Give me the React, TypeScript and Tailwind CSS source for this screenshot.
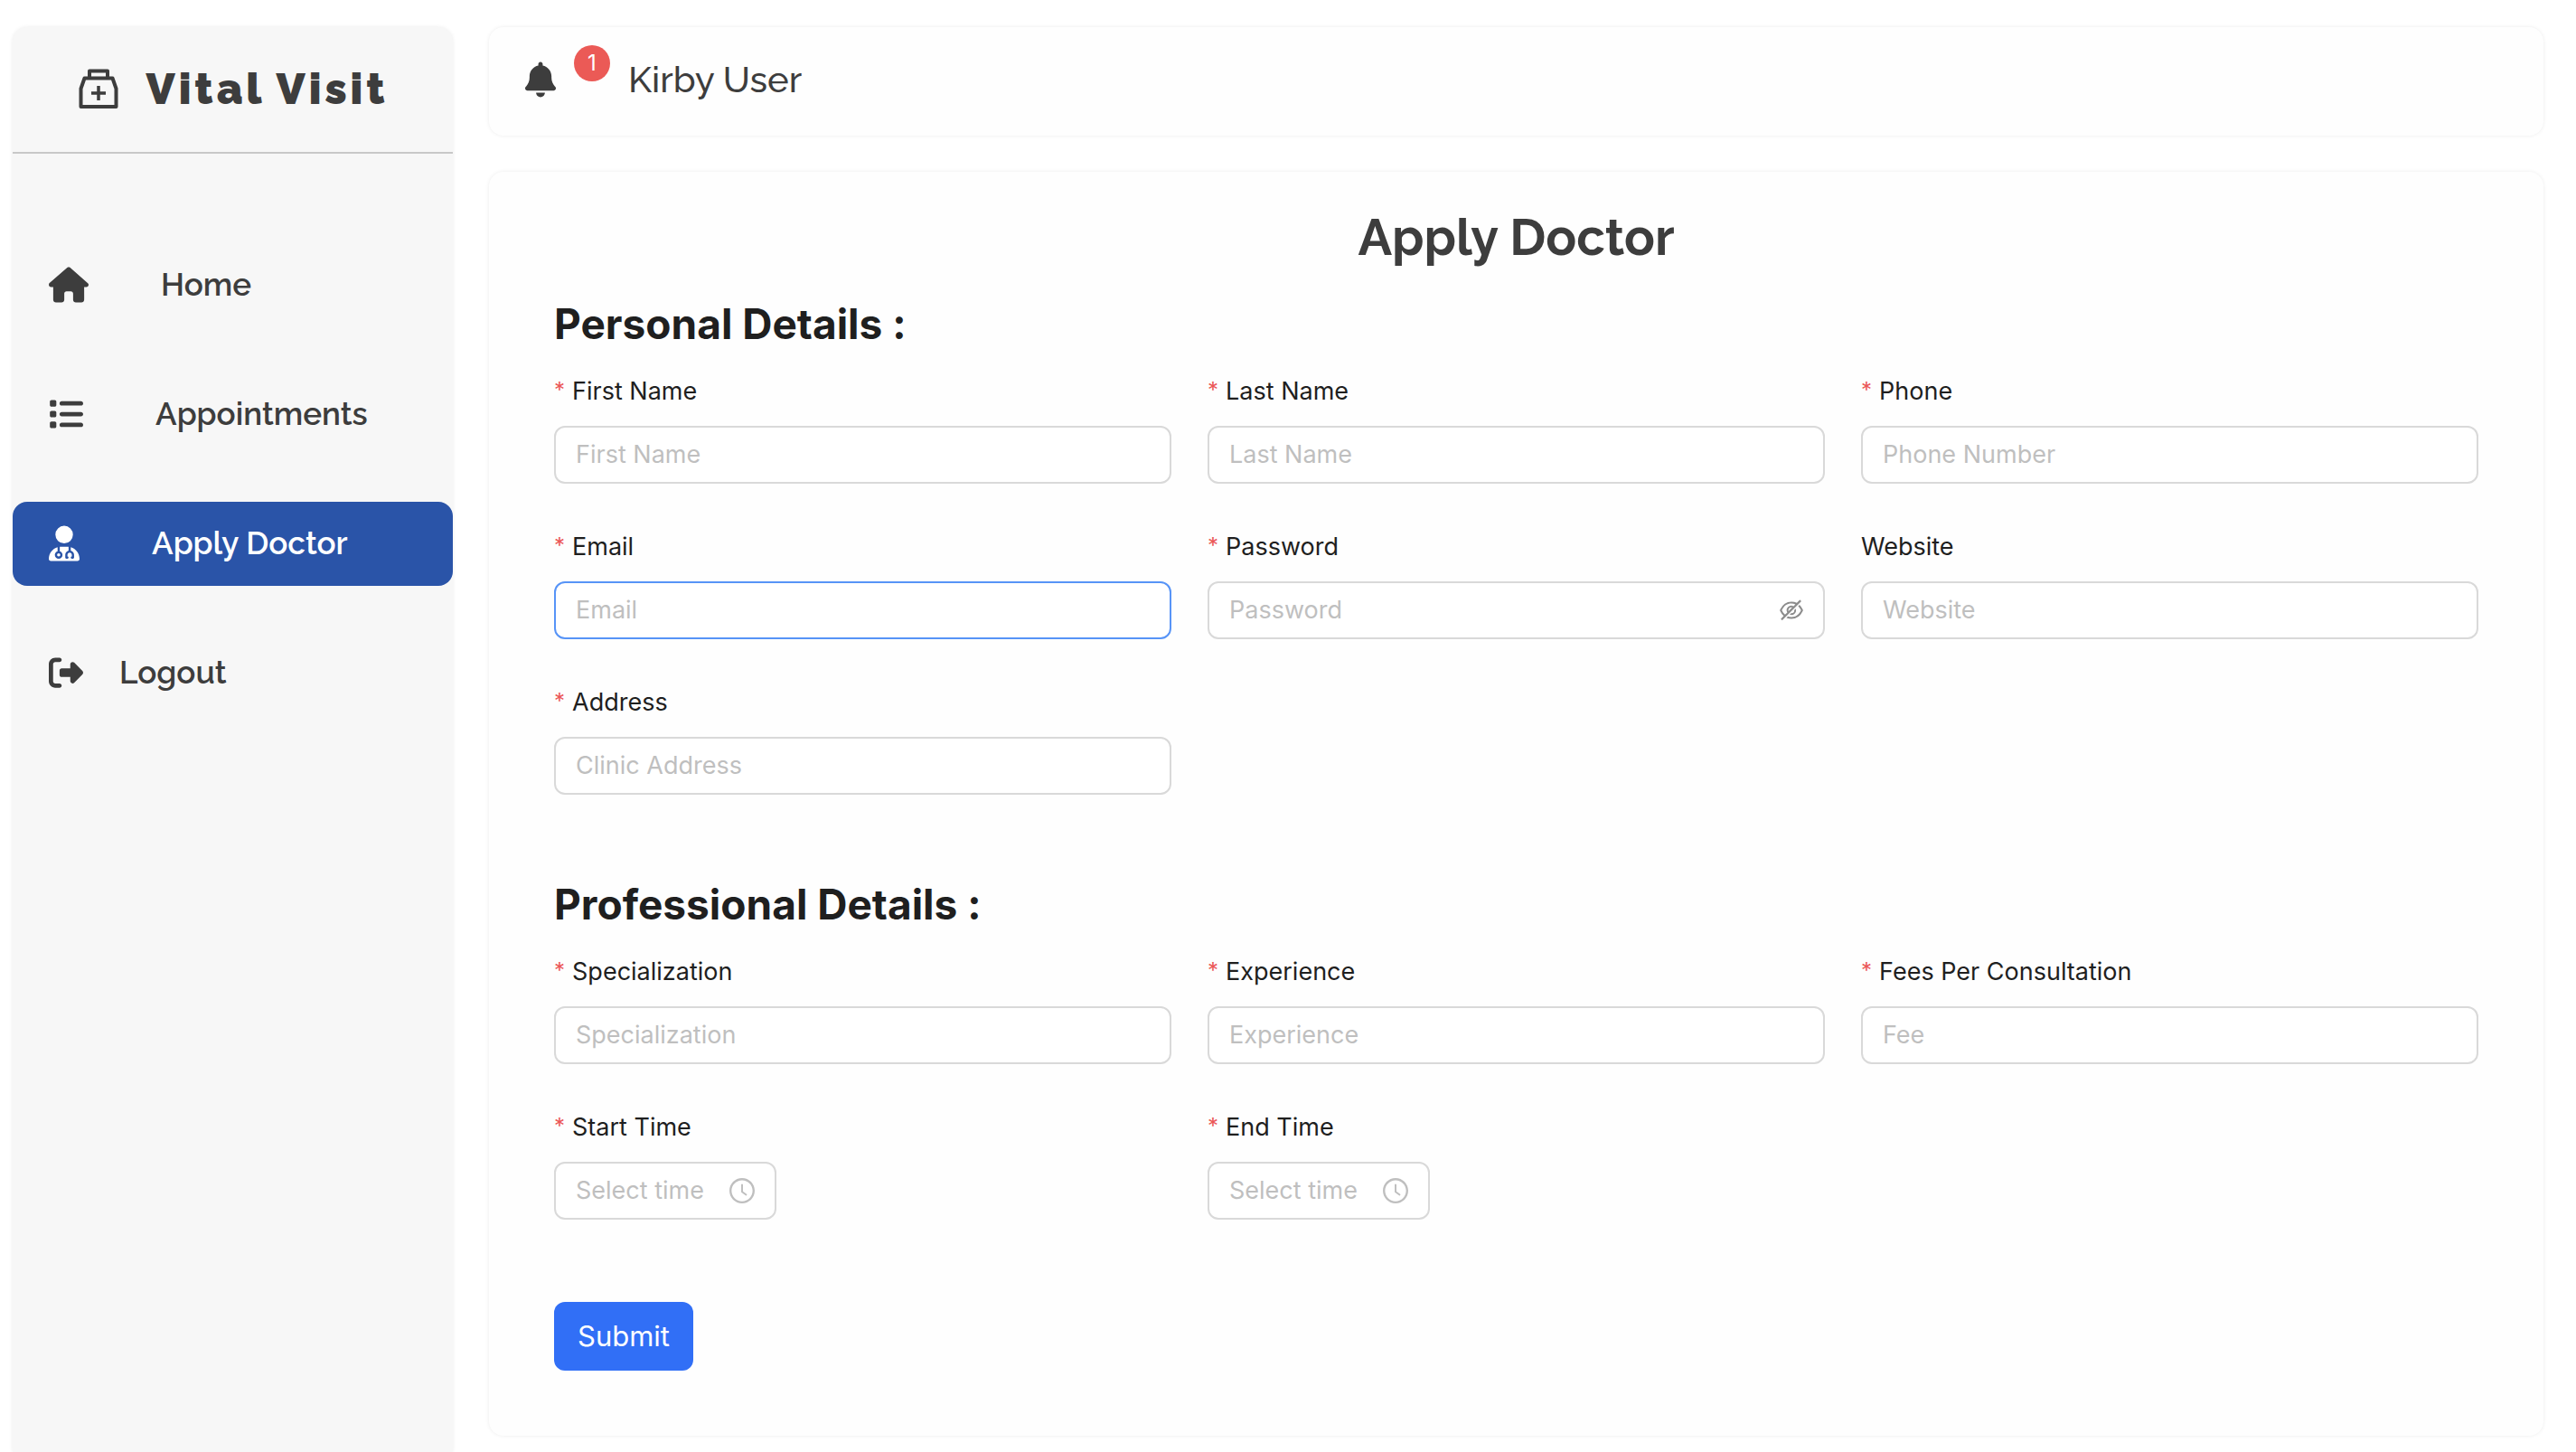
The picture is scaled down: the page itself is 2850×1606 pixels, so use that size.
import { useId, type ReactNode } from "react";
import { FaBell, FaHouse, FaList, FaRightFromBracket, FaUserDoctor } from "react-icons/fa6";
import { AiOutlineClockCircle, AiOutlineEyeInvisible } from "react-icons/ai";

function LogoIcon() {
  return (
    <svg viewBox="0 0 48 48" className="size-12 shrink-0" fill="none" stroke="currentColor" strokeWidth="4" aria-hidden="true">
      <path d="M4.5 44V24L8.5 12.5H39.5L43.5 24V44Z" strokeLinejoin="round" />
      <path d="M14 12.5V4.5H34V12.5" strokeLinejoin="round" />
      <path d="M16 29H32M24 21V37" strokeWidth="3.5" />
    </svg>
  );
}

function NavItem({ icon, label, active, near }: { icon: ReactNode; label: string; active?: boolean; near?: boolean }) {
  return (
    <li>
      <a
        href="#"
        aria-current={active ? "page" : undefined}
        className={
          "flex h-[93px] items-center rounded-2xl pb-0.5 pl-10 text-[35px] leading-[42px] " +
          (near ? "gap-10 " : "gap-20 ") +
          (active ? "bg-[#2a54a8] text-white" : "text-[#3d3d3d]")
        }
      >
        {icon}
        <span>{label}</span>
      </a>
    </li>
  );
}

type FieldProps = {
  label: string;
  placeholder: string;
  required?: boolean;
  active?: boolean;
  type?: string;
  short?: boolean;
  suffix?: ReactNode;
};

function Field({ label, placeholder, required = true, active, type = "text", short, suffix }: FieldProps) {
  const id = useId();
  return (
    <div className="flex flex-col items-start gap-4">
      <label htmlFor={id} className="flex gap-2 text-[27px] leading-[44px] text-[#1f1f1f]">
        {required && <span className="text-[24px] leading-[42px] text-[#eb5757]">*</span>}
        {label}
      </label>
      <div
        className={
          "flex h-16 items-center rounded-xl border-2 bg-white pr-5 pl-[22px] " +
          (short ? "w-[246px] " : "w-full ") +
          (active ? "border-[#5794f7]" : "border-[#d9d9d9]")
        }
      >
        <input
          id={id}
          type={type}
          placeholder={placeholder}
          className="w-full min-w-0 flex-1 bg-transparent text-[27px] leading-[44px] text-[#1f1f1f] outline-none placeholder:text-[#bfbfbf]"
        />
        {suffix}
      </div>
    </div>
  );
}

const grid = "grid grid-cols-3 gap-x-10 gap-y-12 pt-[23px]";
const heading = "text-[46px] leading-[60px] font-bold text-[#1f1f1f]";

export default function App() {
  return (
    <div className="flex min-h-screen gap-10 bg-white pt-[30px] pr-9 pl-[14px] font-[Inter,sans-serif]">
      <aside className="w-[487px] shrink-0 rounded-t-2xl bg-[#f7f7f7] font-[Raleway,Lato,sans-serif] font-semibold shadow-[0_0_4px_rgba(0,0,0,0.08)]">
        <div className="flex h-[140px] items-center justify-center gap-7 border-b-2 border-[#c8c8c8] pb-0.5 text-[#3d3d3d]">
          <LogoIcon />
          <span className="text-[48px] leading-[56px] font-black tracking-[4px]">Vital Visit</span>
        </div>
        <nav className="pt-[99px]">
          <ul className="flex flex-col gap-[50px]">
            <NavItem icon={<FaHouse className="h-10 w-11" />} label="Home" />
            <NavItem icon={<FaList className="size-[38px]" />} label="Appointments" />
            <NavItem icon={<FaUserDoctor className="h-10 w-[34px]" />} label="Apply Doctor" active />
            <NavItem icon={<FaRightFromBracket className="size-[38px]" />} label="Logout" near />
          </ul>
        </nav>
      </aside>

      <div className="flex min-w-0 flex-1 flex-col gap-10 pb-4">
        <header className="flex h-[120px] items-center rounded-2xl bg-[#fefefe] pb-1 pl-10 text-[#3d3d3d] shadow-[0_0_4px_rgba(0,0,0,0.08)]">
          <button type="button" aria-label="Notifications" className="flex items-center gap-5">
            <FaBell className="h-10 w-[34px]" />
            <span className="mb-9 flex size-10 items-center justify-center rounded-full bg-[#eb5a56] text-[24px] leading-[40px] text-white">1</span>
          </button>
          <a href="#" className="ml-5 font-[Raleway,Lato,sans-serif] text-[40px] leading-[48px] font-medium">Kirby User</a>
        </header>

        <main className="rounded-2xl bg-[#fefefe] px-[72px] pt-9 pb-[72px] shadow-[0_0_4px_rgba(0,0,0,0.08)]">
          <h1 className="text-center font-[Raleway,Lato,sans-serif] text-[56px] leading-[72px] font-bold text-[#3d3d3d]">Apply Doctor</h1>
          <form className="flex flex-col pt-[30px]" onSubmit={(e) => e.preventDefault()}>
            <h2 className={heading}>Personal Details :</h2>
            <div className={grid}>
              <Field label="First Name" placeholder="First Name" />
              <Field label="Last Name" placeholder="Last Name" />
              <Field label="Phone" placeholder="Phone Number" />
              <Field label="Email" placeholder="Email" active />
              <Field
                label="Password"
                placeholder="Password"
                type="password"
                suffix={
                  <button type="button" aria-label="Show password" className="text-[#8c8c8c]">
                    <AiOutlineEyeInvisible className="size-[30px]" />
                  </button>
                }
              />
              <Field label="Website" placeholder="Website" required={false} />
              <Field label="Address" placeholder="Clinic Address" />
            </div>
            <h2 className={heading + " pt-[91px]"}>Professional Details :</h2>
            <div className={grid}>
              <Field label="Specialization" placeholder="Specialization" />
              <Field label="Experience" placeholder="Experience" />
              <Field label="Fees Per Consultation" placeholder="Fee" />
              <Field label="Start Time" placeholder="Select time" short suffix={<AiOutlineClockCircle className="size-8 shrink-0 text-[#bfbfbf]" />} />
              <Field label="End Time" placeholder="Select time" short suffix={<AiOutlineClockCircle className="size-8 shrink-0 text-[#bfbfbf]" />} />
            </div>
            <button type="submit" className="mt-[91px] h-[76px] self-start rounded-xl bg-[#316ff6] px-[26px] text-[31px] leading-[48px] text-white">
              Submit
            </button>
          </form>
        </main>
      </div>
    </div>
  );
}
